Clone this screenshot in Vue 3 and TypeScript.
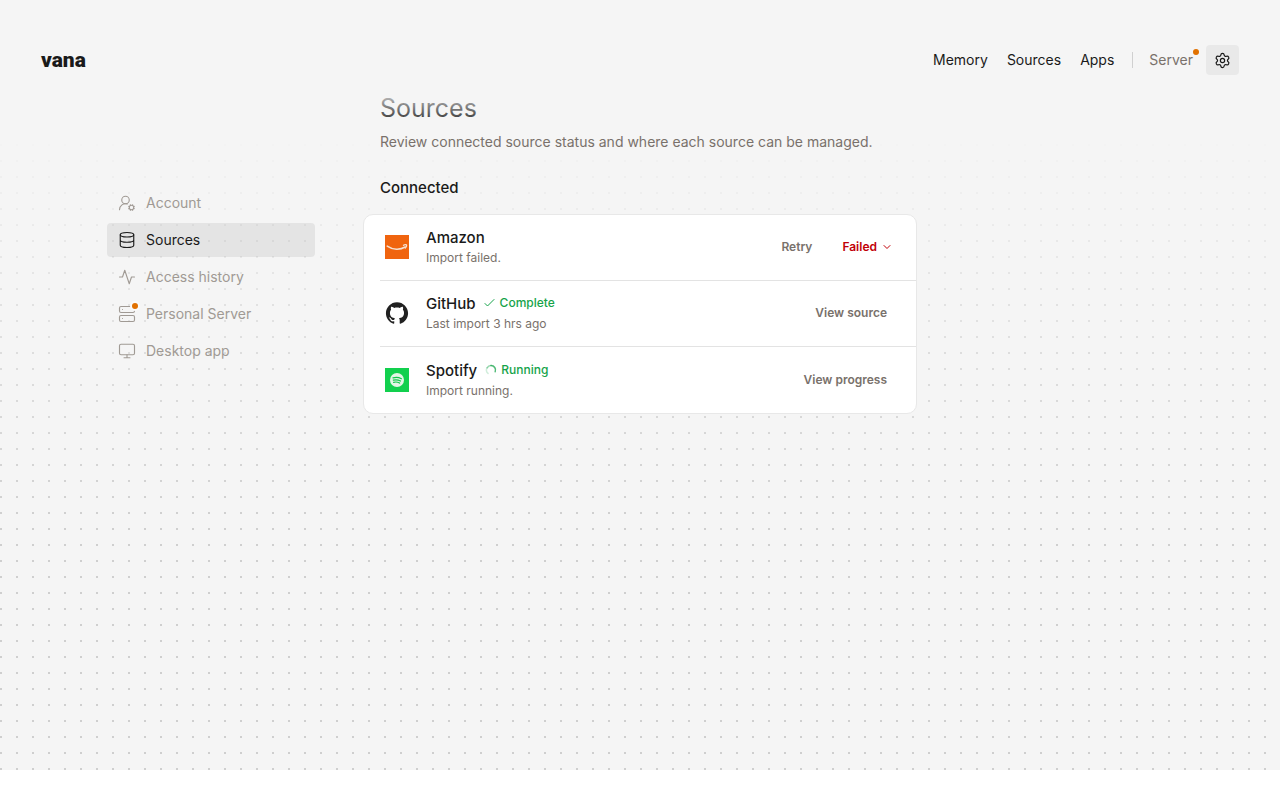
<script setup lang="ts">
interface NavLink { label: string; href: string }
interface SideItem { label: string; icon: string; active?: boolean; alert?: boolean }
interface Source {
  name: string
  detail: string
  logo: 'amazon' | 'github' | 'spotify'
  status?: 'Complete' | 'Running'
  failed?: boolean
  action: string
}

const links: NavLink[] = [
  { label: 'Memory', href: '#memory' },
  { label: 'Sources', href: '#sources' },
  { label: 'Apps', href: '#apps' },
]

const sideItems: SideItem[] = [
  { label: 'Account', icon: 'account' },
  { label: 'Sources', icon: 'database', active: true },
  { label: 'Access history', icon: 'activity' },
  { label: 'Personal Server', icon: 'server', alert: true },
  { label: 'Desktop app', icon: 'monitor' },
]

const sources: Source[] = [
  { name: 'Amazon', detail: 'Import failed.', logo: 'amazon', failed: true, action: 'Retry' },
  { name: 'GitHub', detail: 'Last import 3 hrs ago', logo: 'github', status: 'Complete', action: 'View source' },
  { name: 'Spotify', detail: 'Import running.', logo: 'spotify', status: 'Running', action: 'View progress' },
]
</script>

<template>
  <div class="page">
    <header class="topbar">
      <a class="brand" href="#home">vana</a>
      <nav class="topnav" aria-label="Main">
        <a v-for="link in links" :key="link.label" :href="link.href">{{ link.label }}</a>
        <span class="divider"></span>
        <a class="server" href="#server">Server<span class="dot"></span></a>
        <button class="settings" type="button" aria-label="Settings">
          <svg class="icon" viewBox="0 0 24 24" stroke-width="1.7">
            <path d="M9.671 4.136a2.34 2.34 0 0 1 4.659 0 2.34 2.34 0 0 0 3.319 1.915 2.34 2.34 0 0 1 2.33 4.033 2.34 2.34 0 0 0 0 3.831 2.34 2.34 0 0 1-2.33 4.033 2.34 2.34 0 0 0-3.319 1.915 2.34 2.34 0 0 1-4.659 0 2.34 2.34 0 0 0-3.32-1.915 2.34 2.34 0 0 1-2.33-4.033 2.34 2.34 0 0 0 0-3.831A2.34 2.34 0 0 1 6.35 6.051a2.34 2.34 0 0 0 3.319-1.915" />
            <circle cx="12" cy="12" r="3" />
          </svg>
        </button>
      </nav>
    </header>

    <div class="layout">
      <nav class="sidebar" aria-label="Settings sections">
        <a v-for="item in sideItems" :key="item.label" href="#section" class="side-item" :class="{ active: item.active }">
          <span class="side-icon">
            <svg class="icon" viewBox="0 0 24 24" stroke-width="1.5">
              <g v-if="item.icon === 'account'">
                <path d="M2 21a8 8 0 0 1 10.434-7.62" />
                <circle cx="10" cy="8" r="5" />
                <circle cx="18" cy="18" r="3" />
                <path d="m14.305 19.53.923-.382M15.228 16.852l-.923-.383M16.852 15.228l-.383-.923M16.852 20.772l-.383.924M19.148 15.228l.383-.923M19.53 21.696l-.382-.924M20.772 16.852l.924-.383M20.772 19.148l.924.383" />
              </g>
              <g v-else-if="item.icon === 'database'">
                <ellipse cx="12" cy="5" rx="9" ry="3" />
                <path d="M3 5v14a9 3 0 0 0 18 0V5M3 12a9 3 0 0 0 18 0" />
              </g>
              <path v-else-if="item.icon === 'activity'" d="M22 12h-4l-3 9L9 3l-3 9H2" />
              <g v-else-if="item.icon === 'server'">
                <rect x="2" y="2" width="20" height="8" rx="2" />
                <rect x="2" y="14" width="20" height="8" rx="2" />
                <path d="M6 6h.01M6 18h.01" />
              </g>
              <g v-else>
                <rect x="2" y="3" width="20" height="14" rx="2" />
                <path d="M8 21h8M12 17v4" />
              </g>
            </svg>
            <span v-if="item.alert" class="dot ringed"></span>
          </span>
          {{ item.label }}
        </a>
      </nav>

      <main class="content">
        <h1>Sources</h1>
        <p class="lead">Review connected source status and where each source can be managed.</p>
        <h2>Connected</h2>
        <ul class="card">
          <li v-for="source in sources" :key="source.name" class="row">
            <svg v-if="source.logo === 'amazon'" class="logo" viewBox="0 0 24 24">
              <rect width="24" height="24" fill="#f0640f" />
              <path d="M2.200 11.100c5.800 4 12.900 4 18 .9" fill="none" stroke="#f5e0d2" stroke-width="1.500" stroke-linecap="round" />
              <path d="M18.500 10.300c1.200-.8 3-.8 3.100-.2s-.4 2-1.300 3" fill="none" stroke="#f5e0d2" stroke-width="1.300" stroke-linecap="round" />
            </svg>
            <svg v-else-if="source.logo === 'github'" class="logo" viewBox="-1 -1 26 26">
              <path fill="#212121" d="M12 .297c-6.630 0-12 5.373-12 12 0 5.303 3.438 9.800 8.205 11.385.6.113.82-.258.82-.577 0-.285-.01-1.040-.015-2.040-3.338.724-4.042-1.610-4.042-1.610C4.422 18.070 3.633 17.700 3.633 17.700c-1.087-.744.084-.729.084-.729 1.205.084 1.838 1.236 1.838 1.236 1.070 1.835 2.809 1.305 3.495.998.108-.776.417-1.305.760-1.605-2.665-.3-5.466-1.332-5.466-5.930 0-1.310.465-2.380 1.235-3.220-.135-.303-.54-1.523.105-3.176 0 0 1.005-.322 3.300 1.230.960-.267 1.980-.399 3-.405 1.020.006 2.040.138 3 .405 2.280-1.552 3.285-1.230 3.285-1.230.645 1.653.240 2.873.120 3.176.765.840 1.230 1.910 1.230 3.220 0 4.610-2.805 5.625-5.475 5.920.420.360.810 1.096.810 2.220 0 1.606-.015 2.896-.015 3.286 0 .315.210.690.825.570C20.565 22.092 24 17.592 24 12.297c0-6.627-5.373-12-12-12" />
            </svg>
            <svg v-else class="logo" viewBox="0 0 24 24">
              <rect width="24" height="24" fill="#12d04e" />
              <circle cx="12" cy="12" r="7" fill="#e4f5e6" />
              <path d="M8 9.800c2.700-.8 6-.5 8.400.9M8.300 12.200c2.400-.7 5-.4 7.200.8M8.600 14.300c2-.5 4.200-.3 6 .8" fill="none" stroke="#12c64b" stroke-width="1.200" stroke-linecap="round" />
            </svg>

            <div class="info">
              <div class="title">
                <h3>{{ source.name }}</h3>
                <span v-if="source.status" class="status">
                  <svg v-if="source.status === 'Complete'" class="status-icon" viewBox="0 0 12 12">
                    <path d="M1 6.500 3.500 9l6.500-6.500" />
                  </svg>
                  <svg v-else class="status-icon" viewBox="0 0 12 12" stroke-width="1.500">
                    <path d="M6 1.500A4.500 4.500 0 0 1 10.200 7.700" opacity=".75" />
                    <path d="M2.100 3.800A4.500 4.500 0 0 1 6 1.500" opacity=".45" />
                    <path d="M3 9.400A4.500 4.500 0 0 1 2.100 3.800" opacity=".2" />
                  </svg>
                  {{ source.status }}
                </span>
              </div>
              <p class="detail">{{ source.detail }}</p>
            </div>

            <div class="actions">
              <button type="button" class="action">{{ source.action }}</button>
              <button v-if="source.failed" type="button" class="action failed">
                Failed
                <svg class="chevron" viewBox="0 0 12 12"><path d="m3 4.500 3 3 3-3" /></svg>
              </button>
            </div>
          </li>
        </ul>
      </main>
    </div>
  </div>
</template>

<style>
body {
  background: #fff;
}
</style>

<style scoped>
.page {
  position: relative;
  min-height: calc(100vh - 30px);
  background: #f5f5f5;
  color: #1a1a1a;
  font: 14px/20px Inter, "Liberation Sans", sans-serif;
  isolation: isolate;
}
.page::before {
  content: "";
  position: absolute;
  inset: 0;
  z-index: -1;
  background: conic-gradient(from 270deg at 2px 2px, #cfcfcf 90deg, transparent 0) 0 0 / 16px 16px;
  mask-image: linear-gradient(to bottom, transparent 130px, rgba(0, 0, 0, 0.5) 300px, #000 520px);
}
a {
  color: inherit;
  text-decoration: none;
}
button {
  border: 0;
  background: none;
  font: inherit;
  color: inherit;
  cursor: pointer;
}
h1, h2, h3, p, ul {
  margin: 0;
  padding: 0;
}
.icon {
  display: block;
  width: 18px;
  height: 18px;
  fill: none;
  stroke: currentColor;
  stroke-linecap: round;
  stroke-linejoin: round;
}
.topbar {
  position: relative;
  z-index: 1;
  display: flex;
  align-items: center;
  justify-content: space-between;
  padding: 45px 41px 15px;
}
.topbar::after {
  content: "";
  position: absolute;
  top: 100%;
  left: 0;
  right: 0;
  height: 36px;
  background: linear-gradient(to bottom, rgba(245, 245, 245, 0.88), rgba(245, 245, 245, 0));
  pointer-events: none;
}
.brand {
  font: 900 21px/30px Roboto, sans-serif;
}
.topnav {
  display: flex;
  align-items: center;
  gap: 19px;
}
.divider {
  width: 1px;
  height: 16px;
  margin: 0 -3px 0 -1px;
  background: #d0d0d0;
}
.server {
  position: relative;
  color: #79716b;
}
.dot {
  position: absolute;
  top: -1px;
  right: -6px;
  width: 6px;
  height: 6px;
  border-radius: 50%;
  background: #e17100;
}
.settings {
  display: grid;
  place-items: center;
  width: 33px;
  height: 30px;
  margin-left: -6px;
  padding: 0;
  border-radius: 4px;
  background: #e9e9e9;
}
.settings .icon {
  width: 17px;
  height: 17px;
}
.layout {
  display: grid;
  grid-template-columns: 1fr 554px 1fr;
  align-items: start;
}
.sidebar {
  display: grid;
  gap: 3px;
  width: 208px;
  margin: 96px 48px 0 0;
  justify-self: end;
}
.side-item {
  display: flex;
  align-items: center;
  gap: 10px;
  height: 34px;
  padding: 0 11px;
  border-radius: 4px;
  color: #a09a94;
}
.side-item.active {
  background: rgba(0, 0, 0, 0.065);
  color: #1a1a1a;
}
.side-icon {
  position: relative;
}
.dot.ringed {
  top: -2px;
  right: -2px;
  box-shadow: 0 0 0 2px #fafafa;
}
h1 {
  padding: 2px 17px 0;
  font-size: 25px;
  line-height: 32px;
  font-weight: 400;
}
.lead {
  padding: 8px 17px 0;
  color: #79716b;
}
h2 {
  padding: 25px 17px 16px;
  font-size: 15px;
  line-height: 21px;
  font-weight: 500;
}
.card {
  list-style: none;
  padding-left: 16px;
  border: 1px solid #e8e8e8;
  border-radius: 10px;
  background: #fff;
}
.row {
  display: flex;
  align-items: center;
  min-height: 64px;
  padding: 0 17px 1px 5px;
}
.row + .row {
  border-top: 1px solid #e3e3e3;
}
.row:last-child {
  min-height: 66px;
  padding-bottom: 0;
}
.logo {
  width: 24px;
  height: 24px;
  margin-right: 17px;
}
.info {
  flex: 1;
}
.title {
  display: flex;
  align-items: center;
  gap: 8px;
}
h3 {
  font-size: 15px;
  line-height: 21px;
  font-weight: 500;
}
.status {
  display: flex;
  align-items: center;
  gap: 4px;
  color: #16a34a;
  font-size: 12px;
  line-height: 18px;
  font-weight: 500;
}
.status-icon,
.chevron {
  width: 12px;
  height: 12px;
  fill: none;
  stroke: currentColor;
  stroke-linecap: round;
  stroke-linejoin: round;
}
.detail {
  color: #79716b;
  font-size: 12px;
  line-height: 20px;
}
.actions {
  display: flex;
  gap: 12px;
}
.action {
  padding: 0 12px;
  color: #79716b;
  font-size: 12px;
  line-height: 24px;
  font-weight: 600;
}
.action.failed {
  display: flex;
  align-items: center;
  gap: 4px;
  padding: 0 6px;
  color: #c10007;
}
</style>
